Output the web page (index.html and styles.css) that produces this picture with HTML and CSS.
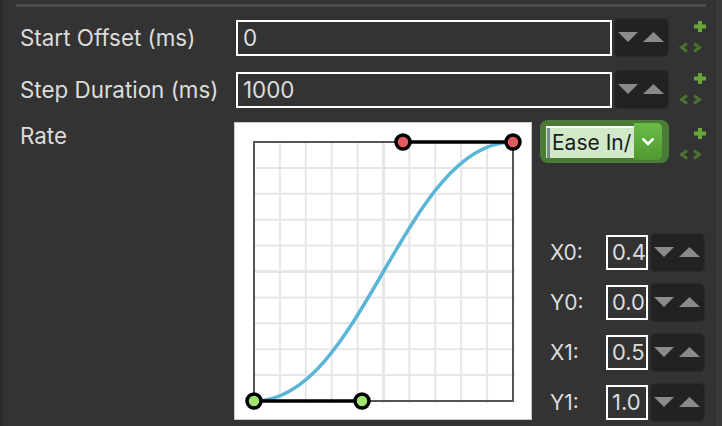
FILE: index.html
```html
<!DOCTYPE html>
<html>
<head>
<meta charset="utf-8">
<link rel="stylesheet" href="styles.css">
</head>
<body>
<div class="app">
  <div class="edge-left"></div>
  <div class="panel">
    <div class="topbar"></div>

    <div class="row first">
      <div class="label">Start Offset (ms)</div>
      <div class="field wide">0</div>
      <div class="stepper">
        <svg width="55" height="39" viewBox="0 0 55 39"><polygon points="4,14 24,14 14,24" class="tri"/><polygon points="29,24 50,24 39.5,14" class="tri"/></svg>
      </div>
      <div class="icons">
        <svg width="27" height="39" viewBox="0 0 27 39"><path d="M15 8.5h12M21 3v11" class="plus"/><path d="M8 25.5l-5.5 4 5.5 4M15 25.5l5.5 4-5.5 4" class="code"/></svg>
      </div>
    </div>

    <div class="row second">
      <div class="label">Step Duration (ms)</div>
      <div class="field wide">1000</div>
      <div class="stepper">
        <svg width="55" height="39" viewBox="0 0 55 39"><polygon points="4,14 24,14 14,24" class="tri"/><polygon points="29,24 50,24 39.5,14" class="tri"/></svg>
      </div>
      <div class="icons">
        <svg width="27" height="39" viewBox="0 0 27 39"><path d="M15 8.5h12M21 3v11" class="plus"/><path d="M8 25.5l-5.5 4 5.5 4M15 25.5l5.5 4-5.5 4" class="code"/></svg>
      </div>
    </div>

    <div class="row rate">
      <div class="label rate-label">Rate</div>
      <div class="graph">
        <svg width="298" height="298" viewBox="0 0 298 298">
          <g class="grid">
            <line x1="45.9" y1="20" x2="45.9" y2="281"/>
            <line x1="71.8" y1="20" x2="71.8" y2="281"/>
            <line x1="97.7" y1="20" x2="97.7" y2="281"/>
            <line x1="123.6" y1="20" x2="123.6" y2="281"/>
            <line x1="175.4" y1="20" x2="175.4" y2="281"/>
            <line x1="201.3" y1="20" x2="201.3" y2="281"/>
            <line x1="227.2" y1="20" x2="227.2" y2="281"/>
            <line x1="253.1" y1="20" x2="253.1" y2="281"/>
            <line y1="45.9" x1="20" y2="45.9" x2="281"/>
            <line y1="71.8" x1="20" y2="71.8" x2="281"/>
            <line y1="97.7" x1="20" y2="97.7" x2="281"/>
            <line y1="123.6" x1="20" y2="123.6" x2="281"/>
            <line y1="175.4" x1="20" y2="175.4" x2="281"/>
            <line y1="201.3" x1="20" y2="201.3" x2="281"/>
            <line y1="227.2" x1="20" y2="227.2" x2="281"/>
            <line y1="253.1" x1="20" y2="253.1" x2="281"/>
            <line x1="149.5" y1="20" x2="149.5" y2="281" class="mid"/>
            <line y1="149.5" x1="20" y2="149.5" x2="281" class="mid"/>
          </g>
          <rect x="20" y="20" width="259" height="259" class="plot"/>
          <path d="M20 279 C128.8 279 170.2 20 279 20" class="curve"/>
          <line x1="20" y1="279" x2="128" y2="279" class="handle"/>
          <line x1="169" y1="20" x2="279" y2="20" class="handle"/>
          <circle cx="20" cy="279" r="7" class="pt-green"/>
          <circle cx="128" cy="279" r="7" class="pt-green"/>
          <circle cx="169" cy="20" r="7" class="pt-red"/>
          <circle cx="279" cy="20" r="7" class="pt-red"/>
        </svg>
      </div>
      <div class="side">
        <div class="dd-row">
          <div class="dropdown">
            <div class="dd-field"><span class="caret"></span><span class="dd-text">Ease In/</span></div>
            <div class="dd-btn">
              <svg width="14" height="9" viewBox="0 0 14 9"><path d="M1.5 1.5l5.5 5.5 5.5-5.5" class="chev"/></svg>
            </div>
          </div>
          <div class="icons">
            <svg width="27" height="39" viewBox="0 0 27 39"><path d="M15 8.5h12M21 3v11" class="plus"/><path d="M8 25.5l-5.5 4 5.5 4M15 25.5l5.5 4-5.5 4" class="code"/></svg>
          </div>
        </div>
        <div class="params">
          <div class="prow">
            <div class="plabel">X0:</div>
            <div class="field small">0.4</div>
            <div class="stepper">
              <svg width="55" height="39" viewBox="0 0 55 39"><polygon points="4,14 24,14 14,24" class="tri"/><polygon points="29,24 50,24 39.5,14" class="tri"/></svg>
            </div>
          </div>
          <div class="prow">
            <div class="plabel">Y0:</div>
            <div class="field small">0.0</div>
            <div class="stepper">
              <svg width="55" height="39" viewBox="0 0 55 39"><polygon points="4,14 24,14 14,24" class="tri"/><polygon points="29,24 50,24 39.5,14" class="tri"/></svg>
            </div>
          </div>
          <div class="prow">
            <div class="plabel">X1:</div>
            <div class="field small">0.5</div>
            <div class="stepper">
              <svg width="55" height="39" viewBox="0 0 55 39"><polygon points="4,14 24,14 14,24" class="tri"/><polygon points="29,24 50,24 39.5,14" class="tri"/></svg>
            </div>
          </div>
          <div class="prow">
            <div class="plabel">Y1:</div>
            <div class="field small">1.0</div>
            <div class="stepper">
              <svg width="55" height="39" viewBox="0 0 55 39"><polygon points="4,14 24,14 14,24" class="tri"/><polygon points="29,24 50,24 39.5,14" class="tri"/></svg>
            </div>
          </div>
        </div>
      </div>
    </div>
  </div>
  <div class="edge-right"></div>
</div>
</body>
</html>
```

FILE: styles.css
```css
html, body {
  margin: 0;
  padding: 0;
  background: #333333;
  width: 722px;
  height: 426px;
  overflow: hidden;
  font-family: Inter, "Noto Sans", sans-serif;
  color: #dcdcdc;
}

.app {
  display: flex;
  width: 722px;
  height: 426px;
}

.edge-left {
  width: 3px;
  background: #2b2b2d;
  flex: none;
}

.edge-right {
  width: 6px;
  background: #3a3a3a;
  flex: none;
}

.panel {
  flex: 1;
  background: #333333;
}

.topbar {
  margin: 4px 0 0 13px;
  width: 690px;
  height: 3px;
  background: #4b4b4b;
}

.row {
  display: flex;
  align-items: center;
  padding-left: 17px;
}

.row.first { margin-top: 11px; }
.row.second { margin-top: 13px; }
.row.rate { margin-top: 11px; align-items: flex-start; }

.label {
  width: 216px;
  flex: none;
  font-size: 22.4px;
  line-height: 26px;
  white-space: nowrap;
}

.rate-label {
  width: 214px;
  padding-top: 3px;
}

.field {
  box-sizing: border-box;
  border: 2px solid #ffffff;
  background: #333333;
  color: #dcdcdc;
  font-size: 22.4px;
  line-height: 31px;
  white-space: nowrap;
  overflow: hidden;
  flex: none;
}

.field.wide {
  width: 376px;
  height: 36px;
  padding-left: 5px;
}

.field.small {
  width: 42px;
  height: 35px;
  padding-left: 4px;
  font-size: 22px;
}

.stepper {
  width: 55px;
  height: 39px;
  margin-left: 2px;
  box-sizing: border-box;
  background: #222222;
  border: 1px solid #2b2b2b;
  border-radius: 5px;
  flex: none;
}

.stepper svg {
  display: block;
  margin: -1px;
}

.tri { fill: #8a8a8a; }

.icons {
  width: 27px;
  height: 39px;
  margin-left: 10px;
  flex: none;
}

.icons svg { display: block; }

.plus {
  stroke: #6aa53b;
  stroke-width: 4;
  fill: none;
}

.code {
  stroke: #4a7230;
  stroke-width: 3;
  fill: none;
}

.graph {
  width: 298px;
  height: 298px;
  margin-top: 2px;
  flex: none;
  background: #ffffff;
  box-shadow: inset 0 0 0 1px #c8c8c8;
}

.graph svg { display: block; }

.grid line {
  stroke: #e6e6e6;
  stroke-width: 2;
}

.grid line.mid { stroke-width: 3; }

.plot {
  fill: none;
  stroke: #555555;
  stroke-width: 2;
}

.curve {
  fill: none;
  stroke: #5ab5d6;
  stroke-width: 3.5;
}

.handle {
  stroke: #000000;
  stroke-width: 3.5;
}

.pt-green {
  fill: #9ee26f;
  stroke: #000000;
  stroke-width: 3.5;
}

.pt-red {
  fill: #e05a5e;
  stroke: #000000;
  stroke-width: 3.5;
}

.side {
  margin-left: 8px;
  display: flex;
  flex-direction: column;
}

.dd-row {
  display: flex;
  align-items: flex-start;
}

.dd-row .icons { margin-top: 5px; }

.dropdown {
  box-sizing: border-box;
  width: 129px;
  height: 43px;
  padding: 3px 7px 3px 6px;
  background: #4a7b37;
  border-radius: 8px;
  display: flex;
  align-items: center;
  flex: none;
}

.dd-field {
  box-sizing: border-box;
  width: 88px;
  height: 32px;
  background: #d1e9c9;
  border-top: 2px solid #ffffff;
  display: flex;
  align-items: center;
  overflow: hidden;
  white-space: nowrap;
}

.caret {
  width: 3px;
  height: 30px;
  background: #7b8a90;
  flex: none;
  margin-left: 1px;
}

.dd-text {
  color: #1c1c1c;
  font-size: 21px;
  margin-left: 2px;
}

.dd-btn {
  width: 28px;
  height: 37px;
  border-radius: 0 5px 5px 0;
  background: linear-gradient(#6cbb48, #4e9a2f);
  display: flex;
  align-items: center;
  justify-content: center;
  flex: none;
}

.chev {
  fill: none;
  stroke: #ffffff;
  stroke-width: 2.5;
}

.params {
  margin-top: 69px;
  display: flex;
  flex-direction: column;
  gap: 11px;
}

.prow {
  display: flex;
  align-items: center;
  height: 39px;
}

.plabel {
  width: 66px;
  padding-left: 10px;
  box-sizing: border-box;
  font-size: 21px;
  flex: none;
}
```
